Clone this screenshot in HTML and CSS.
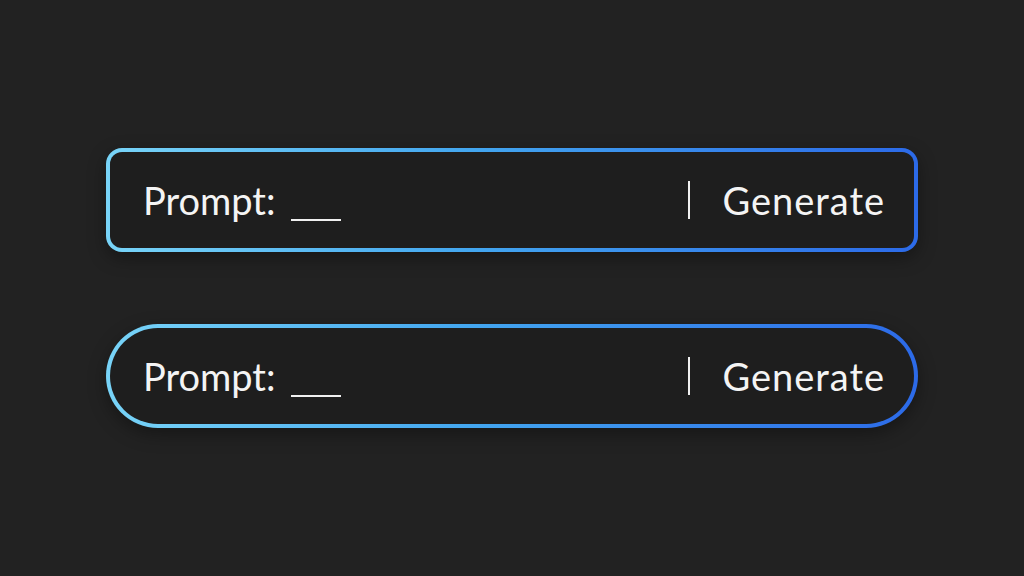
FILE: index.html
```html
<!DOCTYPE html>
<html>
<head>
<meta charset="utf-8">
<link rel="stylesheet" href="styles.css">
</head>
<body>
<main class="stage">
  <div class="bar bar-square">
    <span class="prompt">Prompt:<span class="blank"></span></span>
    <span class="action"><span class="divider"></span><span class="gen">Generate</span></span>
  </div>
  <div class="bar bar-pill">
    <span class="prompt">Prompt:<span class="blank"></span></span>
    <span class="action"><span class="divider"></span><span class="gen">Generate</span></span>
  </div>
</main>
</body>
</html>
```
FILE: styles.css
```css
html, body {
  margin: 0;
  padding: 0;
  background: #222222;
  width: 1024px;
  height: 576px;
  overflow: hidden;
}
.stage {
  display: flex;
  flex-direction: column;
  align-items: flex-start;
  gap: 72px;
  padding: 148px 0 0 106px;
}
.bar {
  box-sizing: border-box;
  width: 812px;
  height: 104px;
  border: 4px solid transparent;
  background:
    linear-gradient(#1e1e1e, #1e1e1e) padding-box,
    linear-gradient(90deg, #78d4f8 0%, #43a6ef 45%, #2c6ae8 100%) border-box;
  display: flex;
  align-items: center;
  justify-content: space-between;
  padding: 0 30px 0 33px;
  font-family: Lato, "Noto Sans", sans-serif;
  font-size: 38px;
  color: #f4f4f4;
  box-shadow: 0 6px 18px rgba(0,0,0,0.35);
}
.bar-square { border-radius: 16px; }
.bar-pill { border-radius: 52px; }
.prompt {
  display: flex;
  align-items: baseline;
}
.blank {
  display: inline-block;
  width: 50px;
  height: 0;
  margin-left: 15px;
  border-bottom: 2px solid #f0f0f0;
  transform: translateY(6px);
}
.action {
  display: flex;
  align-items: center;
  gap: 32px;
}
.divider {
  width: 2px;
  height: 38px;
  background: #f0f0f0;
}
.gen {
  letter-spacing: 1px;
  margin-right: -1px;
}
```
